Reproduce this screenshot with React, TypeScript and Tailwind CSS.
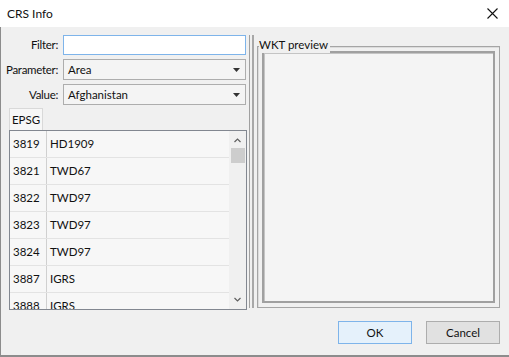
import React from 'react';

const rows = [
  { code: '3819', name: 'HD1909' },
  { code: '3821', name: 'TWD67' },
  { code: '3822', name: 'TWD97' },
  { code: '3823', name: 'TWD97' },
  { code: '3824', name: 'TWD97' },
  { code: '3887', name: 'IGRS' },
  { code: '3888', name: 'IGRS' },
];

const Caret: React.FC = () => (
  <svg width="7" height="4" viewBox="0 0 7 4" className="mr-[5px]">
    <path d="M0 0 H7 L3.5 4 Z" fill="#333" />
  </svg>
);

const Combo: React.FC<{ value: string }> = ({ value }) => (
  <div className="flex h-[21px] flex-1 items-center justify-between border border-[#adadad] bg-[#f4f4f4] pl-[4px]">
    <span>{value}</span>
    <Caret />
  </div>
);

const FormRow: React.FC<{ label: string; children: React.ReactNode }> = ({ label, children }) => (
  <div className="flex items-center">
    <div className="flex w-[49px] shrink-0 justify-end whitespace-nowrap tracking-[-0.3px]">
      <span>{label}</span>
    </div>
    <div className="ml-[5px] flex flex-1">{children}</div>
  </div>
);

const App: React.FC = () => {
  return (
    <div className="flex h-[357px] w-[509px] flex-col overflow-hidden bg-white text-[11.5px] text-[#111] [font-family:Lato,'Noto_Sans',sans-serif]">
      {/* title bar */}
      <div className="flex h-[27px] shrink-0 items-center justify-between bg-white pl-[7px] pr-[11px]">
        <span className="text-[12px]">CRS Info</span>
        <svg width="11" height="11" viewBox="0 0 11 11">
          <path d="M0.5 0.5 L10.5 10.5 M10.5 0.5 L0.5 10.5" stroke="#111" strokeWidth="1.1" />
        </svg>
      </div>

      <div className="flex flex-1 flex-col border-b-[2px] border-l border-[#8c8c8c] bg-[#f0f0f0]">
        <div className="flex h-[282px] pl-[8px] pr-[9px] pt-[8px]">
          {/* left pane */}
          <div className="flex w-[238px] shrink-0 flex-col">
            <div className="flex flex-col gap-[4px] pr-[1px]">
              <FormRow label="Filter:">
                <div className="h-[20px] flex-1 border border-[#7eb4ea] bg-white" />
              </FormRow>
              <FormRow label="Parameter:">
                <Combo value="Area" />
              </FormRow>
              <FormRow label="Value:">
                <Combo value="Afghanistan" />
              </FormRow>
            </div>

            <div className="mt-[3px] flex">
              <div className="flex h-[22px] w-[34px] items-center justify-center border border-b-0 border-[#d9d9d9] bg-[#f7f7f7]">
                EPSG
              </div>
            </div>

            <div className="flex h-[180px] border border-[#828790] bg-[#f7f7f7]">
              <div className="flex flex-1 flex-col overflow-hidden">
                {rows.map((r) => (
                  <div key={r.code} className="flex h-[27px] shrink-0 items-center border-b border-[#e3e3e3]">
                    <span className="flex h-full w-[37px] items-center border-r border-[#d0d0d0] pl-[3px]">{r.code}</span>
                    <span className="pl-[3px]">{r.name}</span>
                  </div>
                ))}
              </div>
              {/* scrollbar */}
              <div className="flex w-[17px] flex-col items-center bg-[#f0f0f0]">
                <svg width="7" height="5" viewBox="0 0 7 5" className="mt-[7px]">
                  <path d="M0.5 4 L3.5 1 L6.5 4" stroke="#606060" fill="none" strokeWidth="1.2" />
                </svg>
                <div className="mt-[5px] h-[15px] w-[14px] bg-[#cdcdcd]" />
                <div className="flex-1" />
                <svg width="7" height="5" viewBox="0 0 7 5" className="mb-[7px]">
                  <path d="M0.5 1 L3.5 4 L6.5 1" stroke="#606060" fill="none" strokeWidth="1.2" />
                </svg>
              </div>
            </div>
          </div>

          {/* splitter */}
          <div className="flex h-[273px] w-[10px] shrink-0">
            <div className="ml-[2px] h-full w-px bg-[#a0a0a0]" />
            <div className="ml-[2px] h-full w-[2px] bg-[#a8a8a8]" />
          </div>

          {/* right pane */}
          <div className="relative mt-[11px] flex h-[262px] flex-1 flex-col border border-[#a5a5a5] p-[4px] shadow-[inset_1px_1px_0_#dcdcdc]">
            <span className="absolute -top-[10px] left-[1px] bg-[#f0f0f0] pr-[2px] leading-[16px]">WKT preview</span>
            <div className="h-full w-full border-2 border-[#a0a0a0] bg-[#f4f4f4] shadow-[inset_1px_1px_0_#c4c4c4]" />
          </div>
        </div>

        {/* buttons */}
        <div className="flex justify-end gap-[14px] pr-[9px] pt-[12px]">
          <button className="flex h-[23px] w-[74px] items-center justify-center border border-[#7eb4ea] bg-[#e5f1fb]">OK</button>
          <button className="flex h-[23px] w-[74px] items-center justify-center border border-[#adadad] bg-[#e1e1e1]">Cancel</button>
        </div>
      </div>
    </div>
  );
};

export default App;
